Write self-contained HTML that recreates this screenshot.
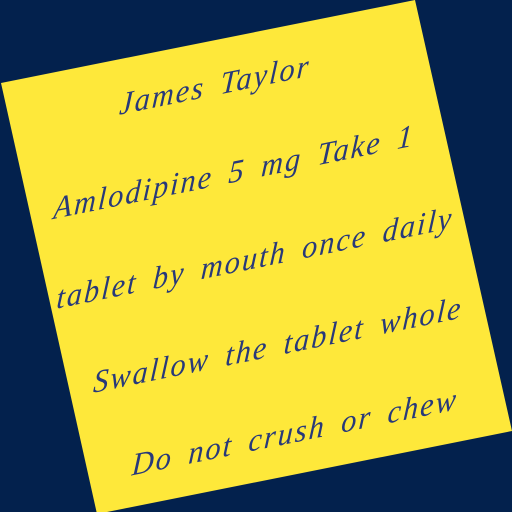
<!DOCTYPE html>
<html><head><style>
body{margin:0;width:512px;height:512px;background:#03214d;overflow:hidden;position:relative}
svg{position:absolute;left:0;top:0}
.t{position:absolute;width:500px;left:0;text-align:center;font-family:"Liberation Serif",serif;font-style:italic;color:#28397a;font-size:31px;letter-spacing:2px;word-spacing:6px;line-height:40px;transform-origin:250px 20px;transform:rotate(-11.5deg) skewX(-15deg)}
</style></head><body>
<svg width="512" height="512"><polygon points="1,83 415,0 512,431 97,514" fill="#fee83a"/></svg>
<div class="t" style="left:-35px;top:65px">James Taylor</div>
<div class="t" style="left:-16px;top:152px">Amlodipine 5 mg Take 1</div>
<div class="t" style="left:5px;top:238px">tablet by mouth once daily</div>
<div class="t" style="left:28px;top:325px">Swallow the tablet whole</div>
<div class="t" style="left:45px;top:412px">Do not crush or chew</div>
</body></html>
